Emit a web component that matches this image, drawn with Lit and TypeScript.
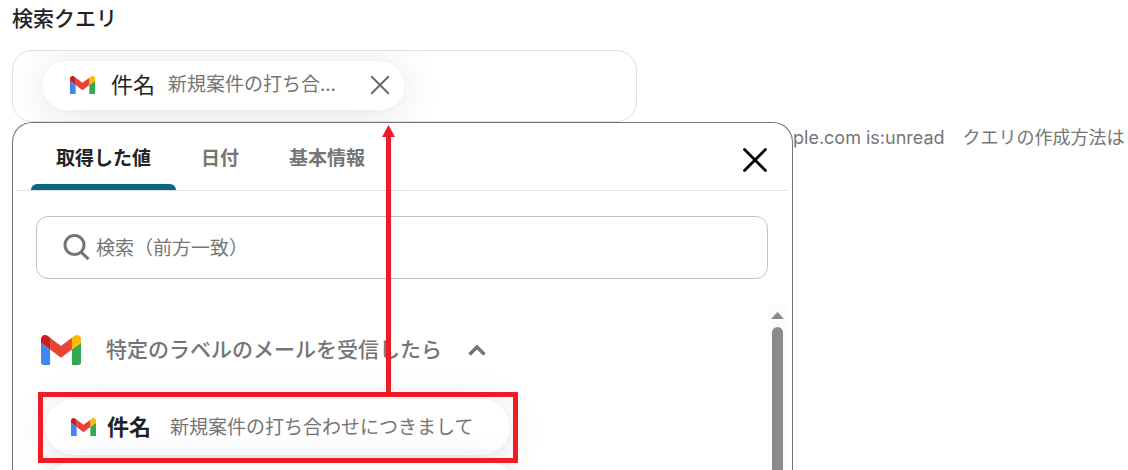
import { LitElement, html, css, svg } from "lit";
import { customElement, property } from "lit/decorators.js";

const cross = (width: number) => svg`<path d="M3 3 21 21M21 3 3 21" fill="none" stroke="currentColor" stroke-width=${width} stroke-linecap="round"/>`;

@customElement("gmail-logo")
class GmailLogo extends LitElement {
  static styles = css`
    :host { display: block; flex: none; }
    svg { display: block; width: 100%; }
  `;
  render() {
    return html`<svg viewBox="52 42 88 66" aria-hidden="true">
      <path fill="#4285f4" d="M58 108h14V74L52 59v43c0 3.32 2.69 6 6 6"/>
      <path fill="#34a853" d="M120 108h14c3.32 0 6-2.69 6-6V59l-20 15"/>
      <path fill="#fbbc04" d="M120 48v26l20-15v-8c0-7.42-8.47-11.65-14.4-7.2"/>
      <path fill="#ea4335" d="M72 74V48l24 18 24-18v26L96 92"/>
      <path fill="#c5221f" d="M52 51v8l20 15V48l-5.6-4.2c-5.94-4.45-14.4-.22-14.4 7.2"/>
    </svg>`;
  }
}

@customElement("value-picker")
class ValuePicker extends LitElement {
  @property({ attribute: false }) tabs = ["取得した値", "日付", "基本情報"];

  static styles = css`
    :host {
      display: flex;
      flex-direction: column;
      box-sizing: border-box;
      border: 1px solid #757575;
      border-bottom: 0;
      border-radius: 20px 20px 0 0;
      background: #fff;
      min-height: 0;
    }
    button { font: inherit; border: 0; background: none; padding: 0; color: inherit; }
    svg { display: block; }
    .header {
      display: flex;
      flex: none;
      height: 67px;
      margin: 0 4px;
      padding: 0 19px 0 14px;
      border-bottom: 1px solid #e0e0e0;
    }
    .tab {
      position: relative;
      font-size: 19px;
      font-weight: 700;
      line-height: 28px;
      color: #757575;
      padding: 0 25px;
    }
    .tab.active { color: #222; }
    .tab.active::after {
      content: "";
      position: absolute;
      inset: auto 0 0 0;
      height: 6px;
      border-radius: 6px 6px 0 0;
      background: #0b6581;
    }
    .close { margin-left: auto; padding-top: 7px; color: #000; }
    .search {
      display: flex;
      flex: none;
      align-items: center;
      gap: 6px;
      height: 61px;
      margin: 25px 24px 0 23px;
      padding: 0 26px;
      border: 1px solid #c4c4c4;
      border-radius: 12px;
      color: #757575;
    }
    .search input {
      flex: 1;
      min-width: 0;
      border: 0;
      padding: 0 0 2px;
      outline: 0;
      background: none;
      font: inherit;
      font-size: 19px;
      line-height: 28px;
    }
    .search input::placeholder { color: #757575; opacity: 1; }
    .list {
      display: flex;
      flex: 1;
      min-height: 0;
      margin: 25px 6px 0 0;
    }
    .items { flex: 1; min-width: 0; padding: 28px 0 0 28px; }
    .group {
      display: flex;
      align-items: center;
      height: 36px;
      color: #757575;
      font-size: 21px;
      font-weight: 500;
      line-height: 28px;
    }
    .group-name { padding-bottom: 4px; }
    .group-logo { width: 40px; margin-right: 25px; }
    .chevron { margin-left: 26px; }
    .entry {
      position: relative;
      width: 465px;
      max-width: 100%;
      margin: 31px 0 0 4px;
    }
    .value, .next {
      box-sizing: border-box;
      width: 100%;
      height: 56px;
      border-radius: 28px;
      background: #fff;
      box-shadow: 0 0 2px rgba(0, 0, 0, 0.08), 0 5px 40px rgba(0, 0, 0, 0.1);
    }
    .value {
      display: flex;
      align-items: center;
      padding: 0 26px;
      text-align: left;
      line-height: 28px;
      white-space: nowrap;
    }
    .value-logo { width: 25px; margin-right: 11px; }
    .name { font-size: 22px; font-weight: 700; color: #222; margin-right: 19px; padding-bottom: 4px; }
    .sample { font-size: 19px; color: #757575; padding-bottom: 2px; }
    .next { position: relative; width: 472px; margin: 7px 0 0 4px; }
    .highlight {
      position: absolute;
      z-index: 1;
      inset: -7px -8px -8px -7px;
      border: 5px solid #ee1c24;
      pointer-events: none;
    }
    .arrow {
      position: absolute;
      left: 337px;
      bottom: 100%;
      margin-bottom: 5px;
      pointer-events: none;
    }
    .scrollbar {
      display: flex;
      flex-direction: column;
      align-items: center;
      width: 18px;
      padding-top: 8px;
      gap: 8px;
      background: #fcfcfc;
      color: #8b8b8b;
    }
    .thumb { flex: 1; width: 11px; border-radius: 6px 6px 0 0; background: #8b8b8b; }
  `;

  render() {
    return html`
      <div class="header" role="tablist">
        ${this.tabs.map((t, i) => html`<button class="tab ${i === 0 ? "active" : ""}" role="tab" aria-selected=${i === 0}>${t}</button>`)}
        <button class="close" aria-label="閉じる"><svg width="28" height="28" viewBox="0 0 24 24">${cross(2.4)}</svg></button>
      </div>
      <label class="search">
        <svg width="27" height="27" viewBox="0 0 27 27" aria-hidden="true"><g fill="none" stroke="currentColor" stroke-width="3"><circle cx="11.5" cy="11" r="9.5"/><path d="m18 18 7.5 7.2"/></g></svg>
        <input type="text" aria-label="検索" placeholder="検索（前方一致）">
      </label>
      <div class="list">
        <div class="items">
          <button class="group" aria-expanded="true">
            <gmail-logo class="group-logo"></gmail-logo>
            <span class="group-name">特定のラベルのメールを受信したら</span>
            <svg class="chevron" width="18" height="12" viewBox="0 0 18 12" aria-hidden="true"><path d="m1.5 10.5 7.5-7.5 7.5 7.5" fill="none" stroke="currentColor" stroke-width="3.4"/></svg>
          </button>
          <div class="entry">
            <button class="value">
              <gmail-logo class="value-logo"></gmail-logo>
              <span class="name">件名</span>
              <span class="sample">新規案件の打ち合わせにつきまして</span>
            </button>
            <div class="highlight"></div>
            <svg class="arrow" width="13" height="269" viewBox="0 0 13 269" aria-hidden="true"><path d="M6.5 0 13 12H9V269H4V12H0Z" fill="#ee1c24"/></svg>
          </div>
          <div class="next"></div>
        </div>
        <div class="scrollbar" aria-hidden="true">
          <svg width="13" height="7" viewBox="0 0 13 7"><path d="M6.5 0 13 7H0Z" fill="currentColor"/></svg>
          <div class="thumb"></div>
        </div>
      </div>
    `;
  }
}

@customElement("app-root")
class AppRoot extends LitElement {
  static styles = css`
    :host {
      display: flex;
      flex-direction: column;
      box-sizing: border-box;
      height: 100vh;
      overflow: hidden;
      padding: 2px 0 0 12px;
      background: #fff;
      color: #222;
      font-family: "Noto Sans CJK JP", sans-serif;
    }
    .title { flex: none; margin: 0 0 18px; font-size: 21px; font-weight: 500; line-height: 30px; }
    .query {
      display: flex;
      flex: none;
      align-items: center;
      box-sizing: border-box;
      width: 100%;
      max-width: 625px;
      height: 72px;
      padding: 0 29px 2px;
      border: 1px solid #dcdfe6;
      border-radius: 20px;
      overflow: hidden;
    }
    .chip {
      display: flex;
      align-items: center;
      box-sizing: border-box;
      width: 363px;
      height: 49px;
      padding: 0 14px 0 28px;
      border-radius: 25px;
      background: #fff;
      box-shadow: 0 0 2px rgba(0, 0, 0, 0.06), 0 5px 40px rgba(0, 0, 0, 0.11);
      line-height: 28px;
      white-space: nowrap;
    }
    .logo { width: 25px; margin-right: 16px; }
    .name { font-size: 22px; margin-right: 13px; padding-bottom: 4px; }
    .sample { font-size: 19px; color: #757575; padding-bottom: 4px; }
    .remove { margin-left: auto; padding: 0; border: 0; background: none; color: #666; }
    .remove svg { display: block; }
    .below {
      display: grid;
      flex: 1;
      min-height: 0;
      grid-template-columns: minmax(0, 781px) 1fr;
    }
    .hint {
      margin: 3px 0 0;
      font-family: Inter, "Noto Sans CJK JP", sans-serif;
      font-size: 18px;
      line-height: 26px;
      color: #757575;
      white-space: nowrap;
    }
  `;

  render() {
    return html`
      <h2 class="title">検索クエリ</h2>
      <div class="query">
        <div class="chip">
          <gmail-logo class="logo"></gmail-logo>
          <span class="name">件名</span>
          <span class="sample">新規案件の打ち合...</span>
          <button class="remove" aria-label="削除"><svg width="22" height="22" viewBox="0 0 24 24">${cross(2)}</svg></button>
        </div>
      </div>
      <div class="below">
        <value-picker></value-picker>
        <p class="hint">ple.com is:unread　クエリの作成方法は</p>
      </div>
    `;
  }
}
